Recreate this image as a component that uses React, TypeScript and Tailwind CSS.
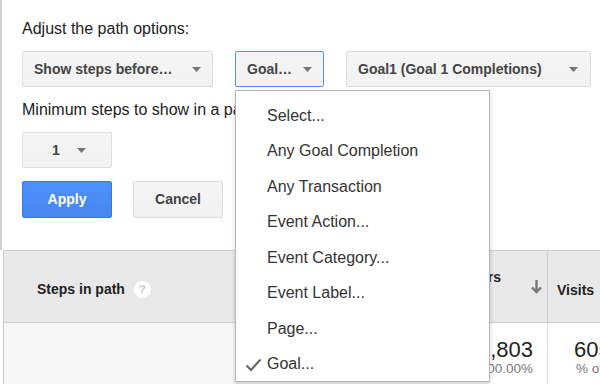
import { ReactNode } from 'react'

const MENU_ITEMS = [
  'Select...',
  'Any Goal Completion',
  'Any Transaction',
  'Event Action...',
  'Event Category...',
  'Event Label...',
  'Page...',
  'Goal...',
]

function Caret() {
  return (
    <svg width="9" height="5" viewBox="0 0 9 5" className="shrink-0">
      <path d="M0 0h9L4.5 5z" fill="#777" />
    </svg>
  )
}

function SelectButton({
  children,
  className,
}: {
  children: ReactNode
  className: string
}) {
  return (
    <div
      className={
        'flex h-[36px] items-center justify-between rounded-[2px] border bg-gradient-to-b from-[#f5f5f5] to-[#f1f1f1] px-[11px] text-[14px] font-bold text-[#444] ' +
        className
      }
    >
      <span>{children}</span>
      <Caret />
    </div>
  )
}

export default function App() {
  return (
    <div className="relative h-[384px] w-[600px] overflow-hidden bg-white font-['Liberation_Sans',Arial,sans-serif] text-[#222]">
      {/* Path options */}
      <div className="h-[250px] border-l-2 border-[#d0d0d0] pl-[20px] pt-[19px]">
        <p className="text-[16px] leading-[20px]">Adjust the path options:</p>

        <div className="mt-[12px] flex gap-[22px]">
          <SelectButton className="w-[191px] border-[#dcdcdc]">
            Show steps before…
          </SelectButton>
          <SelectButton className="w-[89px] border-[#4d90fe]">Goal…</SelectButton>
          <SelectButton className="w-[245px] border-[#dcdcdc] pr-[12px]">
            Goal1 (Goal 1 Completions)
          </SelectButton>
        </div>

        <p className="mt-[13px] text-[16px] leading-[20px]">
          Minimum steps to show in a path:
        </p>

        <div className="mt-[12px] flex h-[36px] w-[90px] items-center justify-center gap-[17px] rounded-[2px] border border-[#dcdcdc] bg-gradient-to-b from-[#f5f5f5] to-[#f1f1f1] pl-[4px] text-[14px] font-bold text-[#444]">
          <span>1</span>
          <Caret />
        </div>

        <div className="mt-[13px] flex gap-[21px]">
          <button className="h-[37px] w-[90px] rounded-[2px] border border-[#3079ed] bg-gradient-to-b from-[#4d90fe] to-[#4787ed] text-[14px] font-bold text-white">
            Apply
          </button>
          <button className="h-[37px] w-[90px] rounded-[2px] border border-[#dcdcdc] bg-gradient-to-b from-[#f5f5f5] to-[#f1f1f1] text-[14px] font-bold text-[#444]">
            Cancel
          </button>
        </div>
      </div>

      {/* Table */}
      <div className="ml-[3px] border-l border-[#cccccc]">
        <div className="flex h-[73px] border-y border-[#cccccc] bg-[#e8e8e8]">
          <div className="flex w-[436px] shrink-0 items-center gap-[9px] pl-[33px] pt-[6px] text-[14px] font-bold">
            <span>Steps in path</span>
            <span className="flex h-[17px] w-[17px] items-center justify-center rounded-full bg-white text-[11px] font-bold text-[#c4c4c4]">
              ?
            </span>
          </div>
          <div className="flex w-[108px] shrink-0 justify-end gap-[30px] border-r border-[#cccccc] pr-[5px] text-[14px] font-bold">
            <span className="whitespace-nowrap pt-[18px] leading-[16px]">Unique Users</span>
            <svg width="11" height="14" viewBox="0 0 11 14" className="mt-[29px] shrink-0">
              <path d="M5.5 0v12M1 7.5l4.5 4.5 4.5-4.5" fill="none" stroke="#777" strokeWidth="2.4" />
            </svg>
          </div>
          <div className="flex min-w-0 flex-1 items-center pl-[9px] pt-[8px] text-[14px] font-bold">
            Visits
          </div>
        </div>
        <div className="flex h-[61px]">
          <div className="w-[436px] shrink-0 bg-[#f7f7f7]" />
          <div className="flex w-[108px] shrink-0 flex-col items-end border-r border-[#dddddd] pr-[14px] pt-[16px]">
            <span className="text-[22px] leading-[22px]">1,803</span>
            <span className="text-[13.5px] leading-[16px] text-[#777]">100.00%</span>
          </div>
          <div className="flex min-w-0 flex-1 flex-col overflow-hidden whitespace-nowrap pt-[16px]">
            <span className="pl-[26px] text-[22px] leading-[22px]">605</span>
            <span className="pl-[28px] text-[13.5px] leading-[16px] text-[#777]">% of Total</span>
          </div>
        </div>
      </div>

      {/* Open dropdown menu */}
      <div className="absolute left-[235px] top-[90px] h-[292px] w-[255px] border border-[#b8b8b8] bg-white pt-[7px] shadow-[0_2px_4px_rgba(0,0,0,0.2)]">
        {MENU_ITEMS.map((item, i) => (
          <div
            key={item}
            className="relative flex h-[35.5px] items-center pl-[31px] text-[16px] text-[#333]"
          >
            {i === MENU_ITEMS.length - 1 && (
              <svg
                width="17"
                height="14"
                viewBox="0 0 17 14"
                className="absolute left-[9px] top-[11px]"
              >
                <path
                  d="M1.5 7.5l4.5 4.5L15.5 1.5"
                  fill="none"
                  stroke="#666"
                  strokeWidth="2.2"
                />
              </svg>
            )}
            {item}
          </div>
        ))}
      </div>
    </div>
  )
}
